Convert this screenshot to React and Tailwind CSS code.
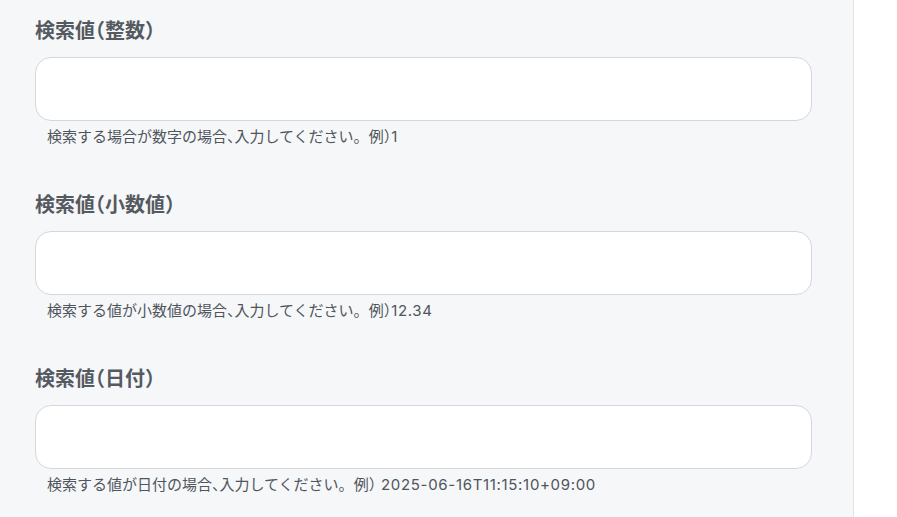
import React from "react";

const FIELDS = [
  { label: "検索値（整数）", help: "検索する場合が数字の場合、入力してください", ex: "1" },
  { label: "検索値（小数値）", help: "検索する値が小数値の場合、入力してください", ex: "12.34" },
  { label: "検索値（日付）", help: "検索する値が日付の場合、入力してください", ex: " 2025-06-16T11:15:10+09:00" },
];

export default function App() {
  return (
    <div
      className="flex h-[517px] w-[897px] overflow-hidden bg-white [font-feature-settings:'halt']"
      style={{ fontFamily: '"Inter", "Noto Sans CJK JP", sans-serif' }}
    >
      <div className="w-[854px] shrink-0 border-r border-[#e3e5e8] bg-[#f6f7f9] pl-[35px] pt-[17px]">
        {FIELDS.map((f) => (
          <div key={f.label} className="mb-[44px] w-[777px]">
            <label className="block text-[20px] font-bold leading-[28px] text-[#555a61]">
              {f.label}
            </label>
            <input
              type="text"
              className="mt-[12px] block h-[64px] w-full rounded-[16px] border border-[#d4d7dc] bg-white px-4 outline-none"
            />
            <p className="mt-[6px] whitespace-pre pl-[12px] text-[15px] leading-[20px] text-[#4f555c]">
              {f.help}
              <span className="[font-feature-settings:normal]">。</span>例）
              <span className="tracking-[0.045em]">{f.ex}</span>
            </p>
          </div>
        ))}
      </div>
      <div className="flex-1" />
    </div>
  );
}
